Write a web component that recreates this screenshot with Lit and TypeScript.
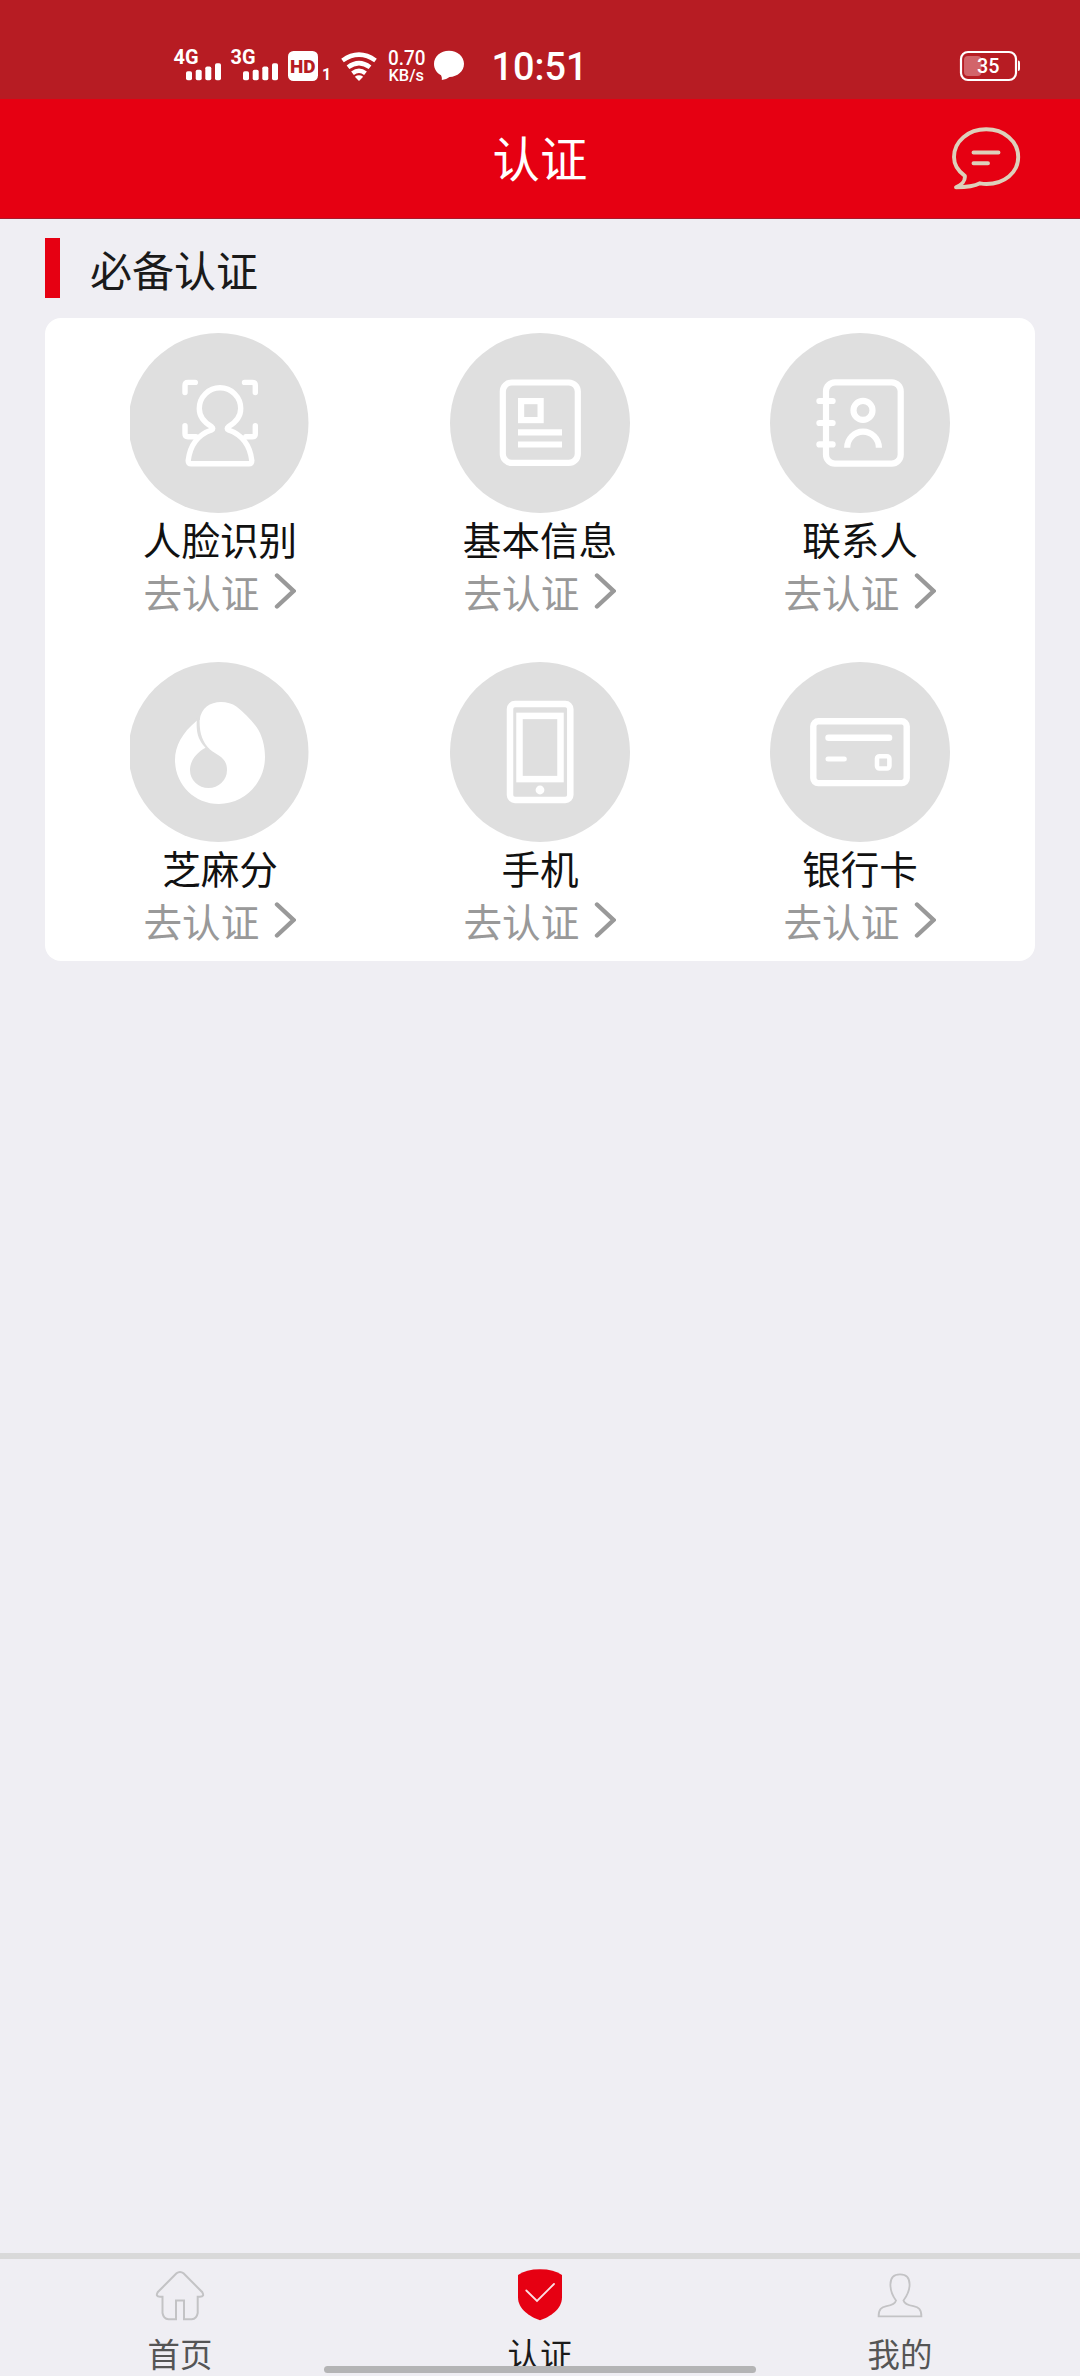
import { LitElement, html, svg, css, SVGTemplateResult } from "lit";
import { customElement, property } from "lit/decorators.js";

const FACE = svg`
  <g fill="none" stroke="#fff" stroke-width="5.4" stroke-linecap="round" stroke-linejoin="round">
    <path d="M65.3 49.4H58q-3 0-3 3v7.2M114.5 49.4h7.8q3 0 3 3v7.2M55 92.7v8q0 3 3 3h8M125.3 92.7v8q0 3-3 3h-6.5"/>
    <path fill="#dfdfdf" d="M81.5 93.5C73.5 89 69.3 82.5 69.3 75.5a20.7 20.7 0 0 1 41.4 0C110.7 82.5 106.5 89 98.5 93.5q-2.5 2 0 3.5C113 102 120 113 121.8 127.5q0 3.3-3 3.3H61.2q-3 0-3-3.3C60 113 67 102 81.5 97q2.5-1.5 0-3.5z"/>
  </g>`;

const INFO = svg`
  <g fill="none" stroke="#fff" stroke-width="6.2">
    <rect x="52.8" y="49.5" width="75" height="80.4" rx="9"/>
    <rect x="71.1" y="68.1" width="19.5" height="19"/>
    <path d="M68 99.3h44M68 111.5h44"/>
  </g>`;

const CONTACT = svg`
  <g fill="none" stroke="#fff" stroke-width="6.2">
    <rect x="56" y="49.3" width="74.7" height="81.4" rx="9"/>
    <path stroke-linecap="round" d="M49.4 68h13.2M49.4 90h13.2M49.4 111.4h13.2"/>
    <circle cx="93" cy="77.4" r="9.5"/>
    <path d="M77.2 114.7a15.85 16 0 0 1 31.7 0"/>
  </g>`;

const SESAME = svg`
  <path fill="#fff" d="M91 40C97 40 102 41.5 106.7 44.7C113 50 121 57 126.7 65.3C132 73 135 84 135 95C135 121 114 142 89 142C64 142 45 122 45 98C45 84 52 71 66.7 58.7L69.7 58C71 46 80 40 91 40z"/>
  <path fill="#dfdfdf" d="M66.9 56.5C65.8 70 68 78 75.5 85.7C66 91 60 99 60 108A18.5 18 0 0 0 97 108C97 95 87 93.5 80 87.5C72 80 69 70 69.7 56z"/>`;

const PHONE = svg`
  <g fill="none" stroke="#fff" stroke-width="6.5">
    <rect x="60" y="42" width="60.3" height="96" rx="5"/>
    <rect x="69.5" y="53.9" width="41" height="63.2"/>
  </g>
  <circle cx="90" cy="128" r="4.4" fill="#fff"/>`;

const BANK = svg`
  <g fill="none" stroke="#fff" stroke-width="6.4">
    <rect x="43.3" y="59.3" width="93.4" height="61.8" rx="5"/>
    <path stroke-linecap="round" d="M58.5 75.7h60.6"/>
    <path stroke-linecap="round" stroke-width="5" d="M58 97h16.3"/>
    <rect x="107" y="94.2" width="12.4" height="12.3" rx="2.5" stroke-width="4.6"/>
  </g>`;

interface Item { label: string; icon: SVGTemplateResult; cx: number; }

const ITEMS: Item[] = [
  { label: "人脸识别", icon: FACE, cx: 88.5 },
  { label: "基本信息", icon: INFO, cx: 90 },
  { label: "联系人", icon: CONTACT, cx: 90 },
  { label: "芝麻分", icon: SESAME, cx: 88.5 },
  { label: "手机", icon: PHONE, cx: 90 },
  { label: "银行卡", icon: BANK, cx: 90 },
];

const FAMILY = css`"Liberation Sans", "Noto Sans CJK SC", sans-serif`;

@customElement("status-bar")
class StatusBar extends LitElement {
  static styles = css`
    :host { display: flex; height: 99px; background: #b71c23; padding: 48px 60px 0 174px; box-sizing: border-box; justify-content: space-between; }
    svg { display: block; overflow: visible; height: 36px; fill: #fff; font-family: Roboto, sans-serif; }
    .left { display: flex; }
    .signal { width: 57px; }
    .hd { width: 53px; }
    .wifi { width: 48px; }
    .rate { width: 45px; }
    .chat { width: 60px; }
    .time { width: 90px; }
    .battery { width: 60px; }
  `;

  private signal(name: string) {
    return html`<svg class="signal" viewBox="174 48 57 36">
      <text x="173.5" y="63.7" font-size="19.5" font-weight="700" textLength="25" lengthAdjust="spacingAndGlyphs">${name}</text>
      <rect x="186" y="71.3" width="6" height="9" rx="1.8"/>
      <rect x="195.7" y="69.7" width="6" height="10.6" rx="1.8"/>
      <rect x="205.3" y="66.5" width="6" height="13.8" rx="1.8"/>
      <rect x="215" y="63.3" width="6" height="17" rx="1.8"/>
    </svg>`;
  }

  render() {
    return html`
      <div class="left">
        ${this.signal("4G")}${this.signal("3G")}
        <svg class="hd" viewBox="288 48 53 36">
          <rect x="288" y="51" width="30" height="30" rx="5.5"/>
          <text x="290" y="73" font-size="19" font-weight="900" fill="#b71c23" textLength="25.5" lengthAdjust="spacingAndGlyphs">HD</text>
          <text x="322" y="80" font-size="16" font-weight="700">1</text>
        </svg>
        <svg class="wifi" viewBox="341 48 48 36">
          <g fill="none" stroke="#fff" stroke-width="4.5">
            <path d="M342.5 60.5Q359 48.8 375.5 60.5"/>
            <path d="M348 67.2Q359 59 370 67.2"/>
            <path d="M352.5 73.2Q359 68.2 365.5 73.2"/>
          </g>
          <path d="M354.8 76.7Q359 73.8 363.2 76.7L359 81z"/>
        </svg>
        <svg class="rate" viewBox="389 48 45 36" font-weight="500">
          <text x="388" y="65.3" font-size="19.5" textLength="37.5" lengthAdjust="spacingAndGlyphs">0.70</text>
          <text x="388.5" y="81" font-size="16" textLength="35.5" lengthAdjust="spacingAndGlyphs">KB/s</text>
        </svg>
        <svg class="chat" viewBox="434 48 60 36">
          <path d="M449 50.7C457.500 50.7 464 56.3 464 63.8S457.500 76.8 449.500 77C447.500 78.6 445 79.6 441.800 80C442 78.3 441.800 76.8 441 75.300C436.700 73 434 69 434 63.8C434 56.3 440.500 50.7 449 50.7z"/>
        </svg>
        <svg class="time" viewBox="494 48 90 36">
          <text x="491.5" y="80" font-size="39" font-weight="500" textLength="96" lengthAdjust="spacingAndGlyphs">10:51</text>
        </svg>
      </div>
      <svg class="battery" viewBox="960 48 60 36">
        <rect x="961" y="52" width="55" height="28" rx="7" fill="none" stroke="#fff" stroke-width="2.2"/>
        <path d="M1018 60.5q2 0 2 2v6.500q0 2-2 2z"/>
        <rect x="964" y="56" width="17.5" height="20" rx="4" fill="#d2646a"/>
        <text x="977" y="73" font-size="19.5" font-weight="500" textLength="22.5" lengthAdjust="spacingAndGlyphs">35</text>
      </svg>`;
  }
}

@customElement("auth-item")
class AuthItem extends LitElement {
  @property({ attribute: false }) item!: Item;

  static styles = css`
    :host { display: flex; flex-direction: column; align-items: center; height: 329px; font-family: ${FAMILY}; font-size: 38.6px; }
    .icon { display: block; width: 180px; height: 180px; }
    .label { height: 51px; line-height: 57px; color: #111; white-space: nowrap; }
    .go { display: flex; align-items: center; gap: 15px; height: 51px; width: 153px; line-height: 51px; color: #999; white-space: nowrap; }
    .go span { padding-top: 9px; }
    .arrow { width: 22px; height: 38px; margin-top: 3px; flex: none; }
  `;

  render() {
    const { label, icon, cx } = this.item;
    return html`
      <svg class="icon" viewBox="0 0 180 180"><circle cx=${cx} cy="90" r="90" fill="#dfdfdf"/>${icon}</svg>
      <div class="label">${label}</div>
      <div class="go"><span>去认证</span>
        <svg class="arrow" viewBox="0 0 22 38"><path d="M3 3.5L19.5 19L3 34.5" fill="none" stroke="#999" stroke-width="4.4" stroke-linecap="round"/></svg>
      </div>`;
  }
}

@customElement("tab-bar")
class TabBar extends LitElement {
  static styles = css`
    :host { display: grid; grid-template-columns: repeat(3, 1fr); justify-items: center; position: relative; box-sizing: border-box; height: 123px; border-top: 6px solid #d9d9d9; background: #efeef3; font-family: ${FAMILY}; font-size: 32.4px; color: #555; }
    .tab { display: flex; flex-direction: column; align-items: center; padding-top: 9px; }
    svg { display: block; width: 54px; height: 54px; flex: none; }
    span { line-height: 38px; margin-top: 15px; white-space: nowrap; }
    .on { color: #1a1a1a; }
    .home-indicator { position: absolute; left: 324px; top: 107px; width: 432px; height: 7px; border-radius: 4px; background: #b4b4b5; }
  `;

  render() {
    return html`
      <div class="tab">
        <svg viewBox="153 2268 54 54" fill="none" stroke="#c3c3c5" stroke-width="2"><path d="M176.500 2273.3q3.500-2.700 7 0L202.300 2292.2q2.500 4.500-2.300 4.500H197.700V2313q-1 5.800-6 6.300H184V2300.500H176V2319.300H168.500q-5-.5-6-6.300V2296.700H160q-4.800 0-2.300-4.500z"/></svg>
        <span>首页</span>
      </div>
      <div class="tab on">
        <svg viewBox="513 2268 54 54"><path fill="#e60012" d="M518 2275Q526 2269.3 540 2269.3T562 2275V2297.500C562 2309 550 2317 540 2320.300C530 2317 518 2309 518 2297.500z"/><path d="M526.300 2290.5L537 2301L554 2284" fill="none" stroke="#fbdfe3" stroke-width="1.8" stroke-linecap="round"/></svg>
        <span>认证</span>
      </div>
      <div class="tab">
        <svg viewBox="873 2268 54 54" fill="none" stroke="#c3c3c5" stroke-width="1.8"><path d="M878.600 2316.4H921.400C921.400 2309 918.500 2307.400 913.500 2306.200C907 2305 904 2302.500 903.500 2300.500C906.500 2296.500 909.600 2292 909.600 2284.500C909.600 2277.500 906 2274.300 900 2274.300S890.400 2277.500 890.400 2284.500C890.400 2292 893 2296.500 896 2300.500C895.500 2302.500 893 2305 886.500 2306.200C881.500 2307.400 878.600 2309 878.600 2316.400z"/></svg>
        <span>我的</span>
      </div>
      <div class="home-indicator"></div>`;
  }
}

@customElement("app-root")
class AppRoot extends LitElement {
  static styles = css`
    :host { display: flex; flex-direction: column; width: 1080px; height: 2376px; overflow: hidden; background: #efeef3; font-family: ${FAMILY}; }
    .header { display: grid; grid-template-columns: 1fr auto 1fr; align-items: center; height: 120px; box-sizing: border-box; background: #e60012; border-bottom: 1px solid #a91a2c; padding: 0 60px; color: #fff; font-size: 47.4px; flex: none; }
    .title { grid-column: 2; line-height: 120px; margin: 2px 0 -2px; white-space: nowrap; }
    .message { justify-self: end; width: 68px; height: 63px; margin-bottom: 2px; overflow: visible; }
    .section { display: flex; align-items: center; gap: 30px; margin: 19px 45px 20px; height: 60px; font-size: 42px; line-height: 60px; color: #1a1a1a; flex: none; }
    .section span { padding-top: 9px; }
    .mark { width: 15px; height: 60px; background: #e60012; }
    .card { display: grid; grid-template-columns: repeat(3, 320px); margin: 0 45px; padding: 15px 15px 0; height: 643px; box-sizing: border-box; background: #fff; border-radius: 16px; flex: none; }
    .space { flex: 1; }
    status-bar, tab-bar { flex: none; }
  `;

  render() {
    return html`
      <status-bar></status-bar>
      <div class="header">
        <div class="title">认证</div>
        <svg class="message" viewBox="0 0 68 63" fill="none" stroke="#ddd0bb" stroke-width="3.9">
          <path stroke-linejoin="round" d="M4 60.3C9.500 58 13.500 53.5 12.800 48.8C6 44 2 37.500 2 30C2 14 16.500 2.3 34.200 2.3S66.200 14 66.200 30S52 57 34.500 57C32 57 30 56.700 28 56.300C22 59.500 12 60.3 4 60.3z"/>
          <path stroke-linecap="round" d="M21.500 25.5h25M21.500 36.2h14.500"/>
        </svg>
      </div>
      <div class="section"><div class="mark"></div><span>必备认证</span></div>
      <div class="card">${ITEMS.map((item) => html`<auth-item .item=${item}></auth-item>`)}</div>
      <div class="space"></div>
      <tab-bar></tab-bar>`;
  }
}
